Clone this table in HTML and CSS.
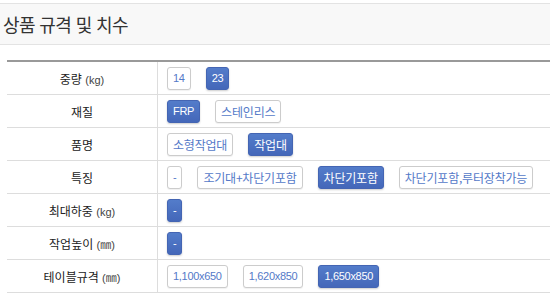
FILE: index.html
```html
<!DOCTYPE html>
<html lang="ko">
<head>
<meta charset="utf-8">
<title>상품 규격 및 치수</title>
<link rel="stylesheet" href="styles.css">
</head>
<body>
<div class="section-head">상품 규격 및 치수</div>
<table class="spec">
  <tr>
    <th>중량 <span class="unit">(kg)</span></th>
    <td><div class="opts"><span class="opt num">14</span><span class="opt num on">23</span></div></td>
  </tr>
  <tr>
    <th>재질</th>
    <td><div class="opts"><span class="opt num on">FRP</span><span class="opt">스테인리스</span></div></td>
  </tr>
  <tr>
    <th>품명</th>
    <td><div class="opts"><span class="opt">소형작업대</span><span class="opt on">작업대</span></div></td>
  </tr>
  <tr>
    <th>특징</th>
    <td><div class="opts"><span class="opt num">-</span><span class="opt">조기대+차단기포함</span><span class="opt on">차단기포함</span><span class="opt">차단기포함,루터장착가능</span></div></td>
  </tr>
  <tr>
    <th>최대하중 <span class="unit">(kg)</span></th>
    <td><div class="opts"><span class="opt num on">-</span></div></td>
  </tr>
  <tr>
    <th>작업높이 <span class="unit">(㎜)</span></th>
    <td><div class="opts"><span class="opt num on">-</span></div></td>
  </tr>
  <tr>
    <th>테이블규격 <span class="unit">(㎜)</span></th>
    <td><div class="opts"><span class="opt num">1,100x650</span><span class="opt num">1,620x850</span><span class="opt num on">1,650x850</span></div></td>
  </tr>
</table>
</body>
</html>
```

FILE: styles.css
```css
html, body {
  margin: 0;
  padding: 0;
  background: #fff;
  overflow: hidden;
}

body {
  font-family: "Noto Sans CJK KR", "Noto Sans", sans-serif;
  color: #333;
}

.section-head {
  margin-top: 3px;
  height: 40px;
  line-height: 40px;
  padding-left: 3px;
  background: #f8f8f8;
  border-top: 1px solid #e3e3e3;
  border-bottom: 1px solid #e3e3e3;
  font-size: 18px;
  letter-spacing: -0.6px;
  color: #333;
}

.spec {
  margin: 15px 0 0 7px;
  width: calc(100% - 7px);
  border-collapse: collapse;
  border-top: 2px solid #999;
}

.spec th,
.spec td {
  height: 32px;
  padding: 0;
  border-bottom: 1px solid #ddd;
}

.spec th {
  width: 150px;
  border-right: 1px solid #ddd;
  font-weight: normal;
  font-size: 12px;
  color: #222;
  text-align: center;
}

.unit {
  font-family: "Liberation Sans", "Noto Sans CJK KR", sans-serif;
  font-size: 11px;
  color: #444;
}

.spec td {
  padding-left: 9px;
}

.opts {
  display: flex;
  gap: 15px;
  align-items: center;
}

.opt {
  box-sizing: border-box;
  height: 23px;
  line-height: 21px;
  padding: 0 5px;
  border: 1px solid #ccc;
  border-radius: 3px;
  background: #fff;
  color: #5479c8;
  font-size: 12px;
  letter-spacing: -0.2px;
  box-shadow: 0 1px 1px rgba(0, 0, 0, 0.06);
}

/* numbers and latin codes use a narrower face */
.opt.num {
  font-family: "Liberation Sans", sans-serif;
  font-size: 11px;
  letter-spacing: -0.3px;
}

.opt.on {
  background: linear-gradient(#537cca, #4467b9);
  border-color: #4465b3;
  color: #fff;
  box-shadow: 0 1px 2px rgba(0, 0, 0, 0.2);
}
```
